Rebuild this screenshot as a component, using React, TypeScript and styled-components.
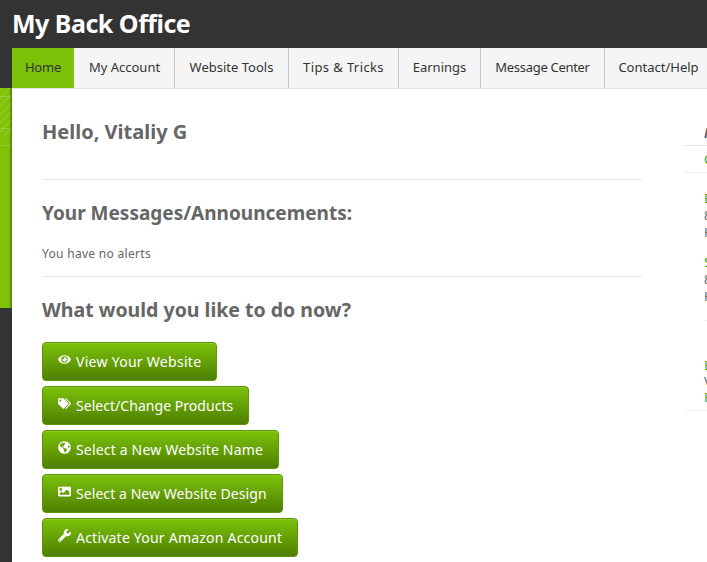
import { createGlobalStyle } from "styled-components";
import styled from "styled-components";
import { FaEye, FaTags, FaGlobeAmericas, FaImage, FaWrench } from "react-icons/fa";

const Global = createGlobalStyle`
  html, body {
    margin: 0;
    padding: 0;
    height: 100%;
    overflow: hidden;
    background: #333;
  }
  body {
    font-family: "Noto Sans", "Liberation Sans", sans-serif;
    color: #666;
  }
`;

const Page = styled.div`
  width: 707px;
  height: 562px;
  overflow: hidden;
  background: #333;
`;

const Header = styled.header`
  height: 48px;
  padding: 0 0 2px 12px;
  box-sizing: border-box;
  display: flex;
  align-items: center;
  background: #333;
`;

const Title = styled.h1`
  margin: 0;
  font-size: 25px;
  font-weight: 700;
  color: #fff;
  letter-spacing: -0.5px;
  white-space: nowrap;
`;

const Body = styled.div`
  display: flex;
  height: 514px;
`;

const Strip = styled.div`
  width: 12px;
  flex-shrink: 0;
  display: flex;
  flex-direction: column;
  padding-top: 40px;
`;

const StripGreen = styled.div`
  height: 220px;
  background:
    linear-gradient(90deg, transparent 9px, rgba(40, 60, 0, 0.55) 12px),
    linear-gradient(rgba(255, 255, 255, 0.18), rgba(255, 255, 255, 0.18)) 0 8px / 12px 1px no-repeat,
    linear-gradient(rgba(255, 255, 255, 0.18), rgba(255, 255, 255, 0.18)) 0 40px / 12px 1px no-repeat,
    linear-gradient(rgba(255, 255, 255, 0.18), rgba(255, 255, 255, 0.18)) 0 57px / 12px 1px no-repeat,
    repeating-linear-gradient(135deg, rgba(255, 255, 255, 0.1) 0 2px, transparent 2px 6px) 0 0 / 12px 48px no-repeat,
    #7fc207;
`;

const Main = styled.div`
  width: 760px;
  flex-shrink: 0;
  display: flex;
  flex-direction: column;
`;

const Nav = styled.nav`
  display: grid;
  grid-template-columns: 63px 100px 114px 110px 82px 124px 108px 1fr;
  height: 41px;
  background: #f5f5f5;
  border-bottom: 1px solid #e2e2e2;
  box-sizing: border-box;
`;

const NavItem = styled.a<{ $active?: boolean; $track: number }>`
  display: flex;
  align-items: center;
  justify-content: center;
  padding-bottom: 2px;
  font-size: 13px;
  letter-spacing: ${(p) => p.$track}px;
  color: #333;
  white-space: nowrap;
  box-sizing: border-box;
  border-right: 1px solid ${(p) => (p.$active ? "#f5f5f5" : "#c9c9c9")};
  background: ${(p) => (p.$active ? "#7cc20a" : "transparent")};
`;

const Content = styled.div`
  flex: 1;
  background: #fff;
  display: flex;
  padding-left: 30px;
`;

const Column = styled.main`
  width: 600px;
  flex-shrink: 0;
`;

const Greeting = styled.h2`
  margin: 0;
  padding-top: 29px;
  height: 91px;
  box-sizing: border-box;
  font-size: 20px;
  line-height: 27px;
  font-weight: 700;
  color: #666;
  border-bottom: 1px solid #e6e6e6;
`;

const Heading = styled.h3<{ $size: number }>`
  margin: 0;
  font-size: ${(p) => p.$size}px;
  line-height: 27px;
  font-weight: 700;
  color: #666;
`;

const Alerts = styled.section`
  padding-top: 20px;
  height: 97px;
  box-sizing: border-box;
  border-bottom: 1px solid #e6e6e6;
`;

const AlertText = styled.p`
  margin: 18px 0 0;
  font-size: 12px;
  line-height: 18px;
  letter-spacing: 0.3px;
  color: #666;
`;

const Actions = styled.section`
  padding-top: 19px;
`;

const ButtonList = styled.div`
  display: flex;
  flex-direction: column;
  align-items: flex-start;
  gap: 5px;
  margin-top: 19px;
`;

const ActionButton = styled.a<{ $track: number }>`
  height: 39px;
  box-sizing: border-box;
  padding: 0 15px;
  display: inline-flex;
  align-items: center;
  gap: 5px;
  border-radius: 4px;
  border: 1px solid #5f9404;
  background: linear-gradient(180deg, #7cc20a 0%, #4e7f02 100%);
  box-shadow: inset 0 1px 0 rgba(255, 255, 255, 0.12);
  color: #fff;
  font-size: 14px;
  letter-spacing: ${(p) => p.$track}px;
  white-space: nowrap;

  svg {
    width: 13px;
    height: 13px;
    flex-shrink: 0;
    transform: translateY(-2px);
  }
`;

const Side = styled.aside`
  margin-left: 42px;
  width: 200px;
  flex-shrink: 0;
  padding-top: 32px;
`;

const SideTitle = styled.h4`
  margin: 0;
  padding-left: 20px;
  height: 24px;
  font-size: 14px;
  line-height: 24px;
  font-style: italic;
  font-weight: 700;
  color: #555;
  border-bottom: 1px solid #e6e6e6;
`;

const SideLink = styled.div`
  padding-left: 20px;
  height: 26px;
  font-size: 13px;
  line-height: 26px;
  color: #4d9a1e;
  border-bottom: 1px solid #f0f0f0;
`;

const SideBlock = styled.div`
  padding: 17px 0 0 20px;
`;

const SideEntry = styled.div`
  margin-bottom: 13px;
  font-size: 13px;
  line-height: 17px;
  color: #666;
`;

const SideName = styled.div`
  color: #4d9a1e;
`;

const SideRule = styled.div`
  margin: 15px 0 36px 20px;
  border-top: 1px solid #f0f0f0;
`;

const SideFoot = styled.div`
  padding: 0 0 5px 20px;
  font-size: 13px;
  line-height: 16px;
  color: #666;
  border-bottom: 1px solid #f0f0f0;
`;

const navItems = [
  { label: "Home", track: -0.2 },
  { label: "My Account", track: 0 },
  { label: "Website Tools", track: 0 },
  { label: "Tips & Tricks", track: 0.4 },
  { label: "Earnings", track: 0 },
  { label: "Message Center", track: -0.3 },
  { label: "Contact/Help", track: 0 },
];

const actions = [
  { icon: <FaEye />, label: "View Your Website", track: 0.28 },
  { icon: <FaTags />, label: "Select/Change Products", track: 0.04 },
  { icon: <FaGlobeAmericas />, label: "Select a New Website Name", track: 0.18 },
  { icon: <FaImage />, label: "Select a New Website Design", track: 0.07 },
  { icon: <FaWrench />, label: "Activate Your Amazon Account", track: 0.22 },
];

export default function App() {
  return (
    <Page>
      <Global />
      <Header>
        <Title>My Back Office</Title>
      </Header>
      <Body>
        <Strip>
          <StripGreen />
        </Strip>
        <Main>
          <Nav>
            {navItems.map((item, i) => (
              <NavItem key={item.label} $active={i === 0} $track={item.track}>
                {item.label}
              </NavItem>
            ))}
          </Nav>
          <Content>
            <Column>
              <Greeting>Hello, Vitaliy G</Greeting>
              <Alerts>
                <Heading $size={19}>Your Messages/Announcements:</Heading>
                <AlertText>You have no alerts</AlertText>
              </Alerts>
              <Actions>
                <Heading $size={19.5}>What would you like to do now?</Heading>
                <ButtonList>
                  {actions.map((a) => (
                    <ActionButton key={a.label} $track={a.track}>
                      {a.icon}
                      {a.label}
                    </ActionButton>
                  ))}
                </ButtonList>
              </Actions>
            </Column>
            <Side>
              <SideTitle>My Sponsor</SideTitle>
              <SideLink>Contact</SideLink>
              <SideBlock>
                <SideEntry>
                  <SideName>Email</SideName>
                  800-555-0100
                  <br />
                  Hours
                </SideEntry>
                <SideEntry>
                  <SideName>Support</SideName>
                  800-555-0101
                  <br />
                  Hours
                </SideEntry>
              </SideBlock>
              <SideRule />
              <SideFoot>
                <SideName>Earnings</SideName>
                View
                <SideName>Reports</SideName>
              </SideFoot>
            </Side>
          </Content>
        </Main>
      </Body>
    </Page>
  );
}
